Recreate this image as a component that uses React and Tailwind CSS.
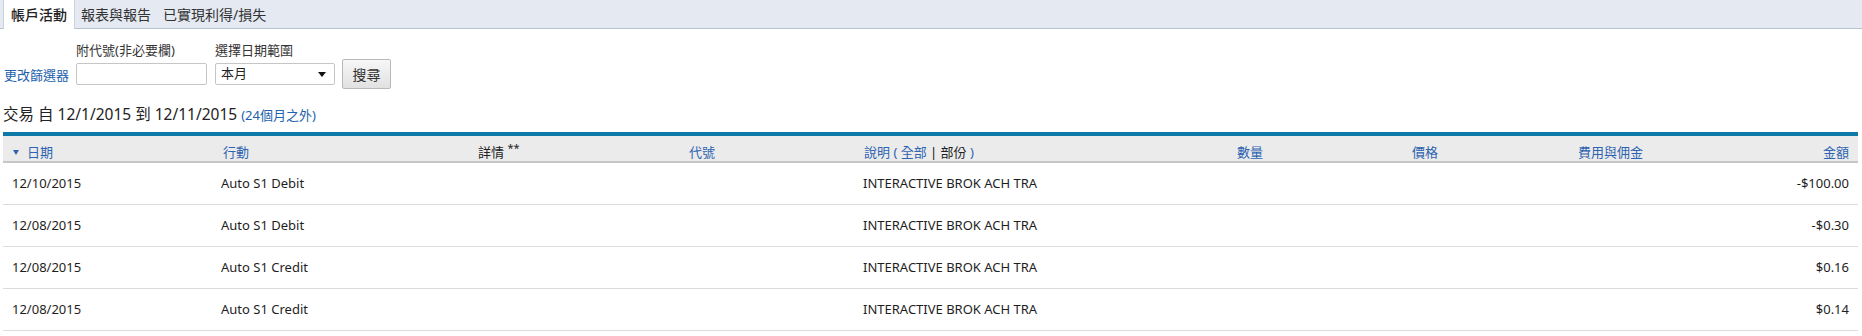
const rows = [
  { date: "12/10/2015", action: "Auto S1 Debit", desc: "INTERACTIVE BROK ACH TRA", amount: "-$100.00" },
  { date: "12/08/2015", action: "Auto S1 Debit", desc: "INTERACTIVE BROK ACH TRA", amount: "-$0.30" },
  { date: "12/08/2015", action: "Auto S1 Credit", desc: "INTERACTIVE BROK ACH TRA", amount: "$0.16" },
  { date: "12/08/2015", action: "Auto S1 Credit", desc: "INTERACTIVE BROK ACH TRA", amount: "$0.14" },
];

const cols =
  "grid grid-cols-[212px_255px_210px_170px_370px_180px_170px_130px_158px]";

const Tabs = () => (
  <div className="flex h-[29px] bg-[#e5eaf2] border-b border-[#b5c4cf] pl-[3px] text-[14px] text-[#333]">
    <div className="h-[29px] -mb-px flex items-center px-[7px] bg-white border-x border-[#c9d3dc] text-[#222] font-medium">
      帳戶活動
    </div>
    <div className="flex items-center px-[6px]">報表與報告</div>
    <div className="flex items-center px-[6px]">已實現利得/損失</div>
  </div>
);

const Filters = () => (
  <div className="ml-[4px] pt-[12px] grid grid-cols-[72px_139px_127px_auto] text-[13px] text-[#333]">
    <div />
    <div className="leading-[18px]">附代號(非必要欄)</div>
    <div className="leading-[18px]">選擇日期範圍</div>
    <div />

    <div className="self-center pt-[4px] text-[#2262ad]">更改篩選器</div>
    <div className="self-center">
      <div className="w-[131px] h-[22px] border border-[#c6c6c6] rounded-[2px] bg-white" />
    </div>
    <div className="self-center">
      <div className="w-[120px] h-[22px] border border-[#c6c6c6] rounded-[2px] bg-white flex items-center justify-between pl-[5px] pr-[8px] text-[#222]">
        <span>本月</span>
        <svg width="8" height="5" viewBox="0 0 8 5">
          <polygon points="0,0 8,0 4,5" fill="#111" />
        </svg>
      </div>
    </div>
    <div>
      <button className="w-[49px] h-[30px] border border-[#b9b9b9] rounded-[2px] bg-gradient-to-b from-[#f7f7f7] to-[#e1e1e1] text-[14px] text-[#333]">
        搜尋
      </button>
    </div>
  </div>
);

const Table = () => (
  <div className="ml-[3px] mr-[4px]">
    <div className="h-[4px] bg-[#0f7aa7]" />
    <div className={`${cols} h-[27px] items-end pb-[1px] bg-[#ebebeb] border-b-2 border-[#c6c6c6] text-[13px] leading-4 text-[#2d63b0]`}>
      <div className="pl-[10px] flex items-center gap-[8px]">
        <svg width="6" height="5" viewBox="0 0 6 5">
          <polygon points="0,0 6,0 3,5" fill="#2d63b0" />
        </svg>
        <span>日期</span>
      </div>
      <div className="pl-[8px]">行動</div>
      <div className="pl-[8px] text-[#222]">
        詳情 <span className="text-[11px] align-[5px]">**</span>
      </div>
      <div className="pl-[9px]">代號</div>
      <div className="pl-[14px]">
        說明 ( 全部 <span className="text-[#111]">|</span>{" "}
        <span className="text-[#222]">部份</span> )
      </div>
      <div className="pl-[17px]">數量</div>
      <div className="pl-[12px]">價格</div>
      <div className="pl-[8px]">費用與佣金</div>
      <div className="pr-[9px] text-right">金額</div>
    </div>
    {rows.map((r, i) => (
      <div
        key={i}
        className={`${cols} h-[42px] items-center border-b border-[#dcdcdc] text-[13px] text-[#1e1e1e]`}
      >
        <div className="pl-[9px]">{r.date}</div>
        <div className="pl-[6px]">{r.action}</div>
        <div />
        <div />
        <div className="pl-[13px]">{r.desc}</div>
        <div />
        <div />
        <div />
        <div className="pr-[9px] text-right">{r.amount}</div>
      </div>
    ))}
  </div>
);

export default function App() {
  return (
    <div className="w-[1862px] h-[336px] bg-white overflow-hidden font-['Noto_Sans','Noto_Sans_CJK_TC',sans-serif]">
      <Tabs />
      <Filters />
      <div className="ml-[3px] mt-[15px] h-[20px] leading-[20px] text-[15.5px] text-[#222]">
        交易 自 12/1/2015 到 12/11/2015{" "}
        <span className="text-[13px] text-[#2262ad]">(24個月之外)</span>
      </div>
      <div className="mt-[8px]">
        <Table />
      </div>
    </div>
  );
}
